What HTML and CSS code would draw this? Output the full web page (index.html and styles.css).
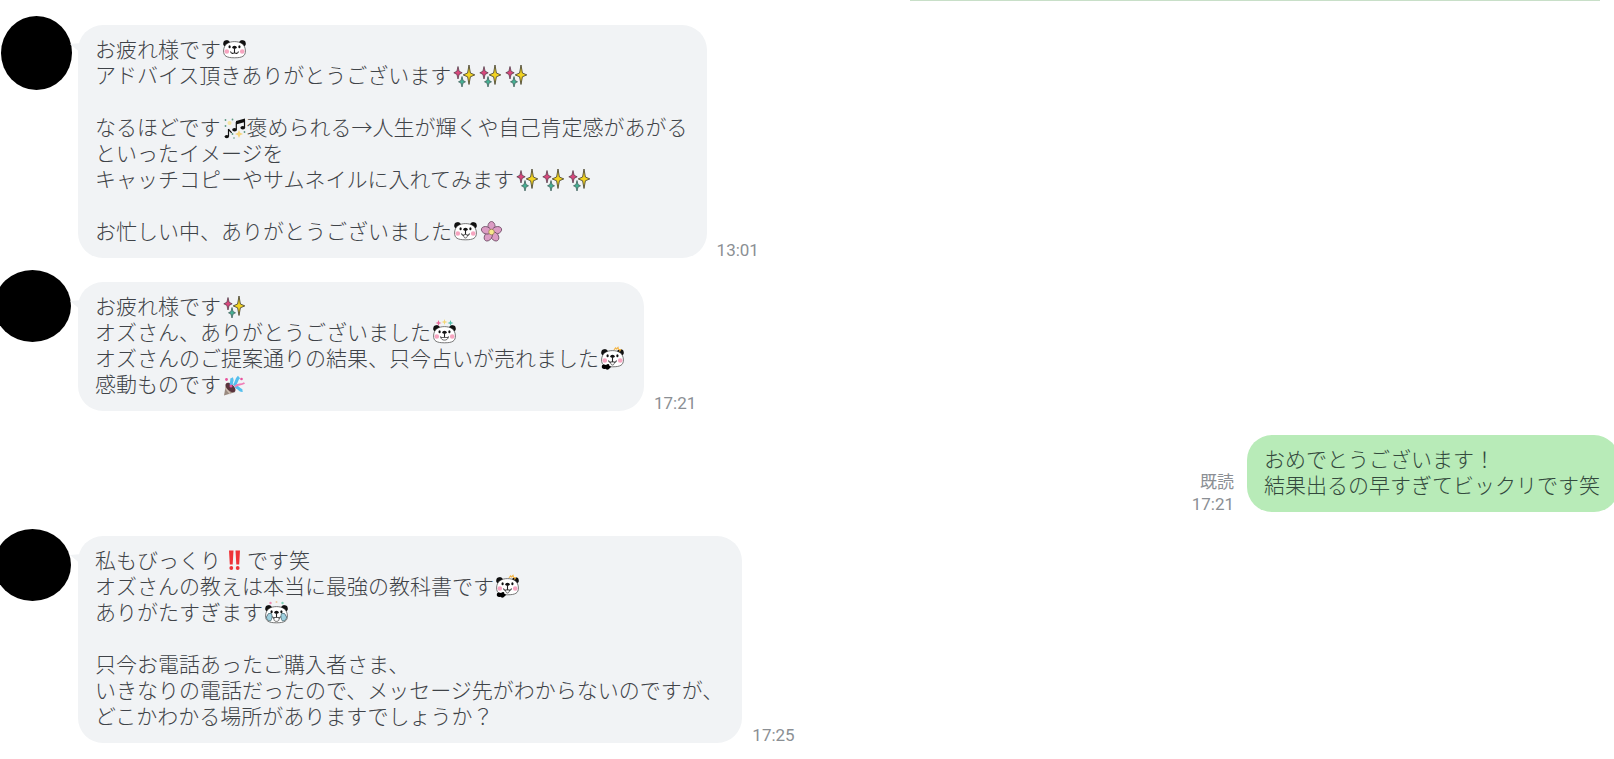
FILE: index.html
```
<!DOCTYPE html>
<html lang="ja">
<head>
  <meta charset="UTF-8">
  <title>トーク</title>
  <link rel="stylesheet" href="styles.css">
</head>
<body>
  <!-- emoji -->
  <svg class="sprites" aria-hidden="true">
    <symbol id="panda-base" viewBox="0 0 25 25">
      <circle cx="4.5" cy="7.5" r="3.2" fill="#111"/>
      <circle cx="20.5" cy="7.5" r="3.2" fill="#111"/>
      <path d="M12.5 5.6C18.5 5.6 23.4 8.5 23.4 15C23.4 20 20.5 21.8 12.5 21.8C4.5 21.8 1.6 20 1.6 15C1.6 8.5 6.5 5.6 12.5 5.6Z" fill="#fff" stroke="#555" stroke-width="0.8"/>
      <path d="M1.6 9C1.5 6 3 4.5 5 4.5C6.5 4.5 7.5 5.2 7.6 6.2C5 7 3 8.5 1.6 9ZM23.4 9C23.5 6 22 4.5 20 4.5C18.5 4.5 17.5 5.2 17.4 6.2C20 7 22 8.5 23.4 9Z" fill="#111"/>
      <circle cx="4.8" cy="15.5" r="2.3" fill="#f6a5c0"/>
      <circle cx="20.2" cy="15.5" r="2.3" fill="#f6a5c0"/>
      <ellipse cx="7.6" cy="10.8" rx="1.1" ry="1.5" fill="#111"/>
      <ellipse cx="17.4" cy="10.8" rx="1.1" ry="1.5" fill="#111"/>
      <ellipse cx="12.5" cy="11.2" rx="2.2" ry="1.5" fill="#111"/>
      <path d="M12.5 12V16.5M8.5 15.5C9 17.8 11.5 17.8 12.5 16.5C13.5 17.8 16 17.8 16.5 15.5" fill="none" stroke="#222" stroke-width="1.1"/>
    </symbol>
    <symbol id="panda" viewBox="0 0 25 25">
      <use href="#panda-base"/>
    </symbol>
    <symbol id="panda-smile" viewBox="0 0 25 25">
      <use href="#panda-base"/>
      <path d="M10.5 17C10.5 21 14.5 21 14.5 17L12.5 16.5Z" fill="#fff" stroke="#444" stroke-width="0.8"/>
    </symbol>
    <symbol id="panda-stars" viewBox="0 0 25 25">
      <use href="#panda-base" y="2"/>
      <path d="M6.5 1L7.3 3.2L9.5 4L7.3 4.8L6.5 7L5.7 4.8L3.5 4L5.7 3.2Z" fill="#e8699a"/>
      <path d="M12.5 0L13.2 2.3L15.5 3L13.2 3.7L12.5 6L11.8 3.7L9.5 3L11.8 2.3Z" fill="#f4d774"/>
      <path d="M18.5 1L19.3 3.2L21.5 4L19.3 4.8L18.5 7L17.7 4.8L15.5 4L17.7 3.2Z" fill="#55bfae"/>
      <path d="M9 18.5H16C16 22 9 22 9 18.5Z" fill="#fff" stroke="#444" stroke-width="0.8"/>
    </symbol>
    <symbol id="panda-hand" viewBox="0 0 25 25">
      <use href="#panda-base"/>
      <path d="M14 5L15.5 3L16.5 4L18 2.5L18.5 4.5L20.5 4.5L19.5 6.5" fill="none" stroke="#f3b64a" stroke-width="1.2"/>
      <path d="M10.5 17C10.5 21 14.5 21 14.5 17Z" fill="#fff" stroke="#444" stroke-width="0.8"/>
      <path d="M2 20.5C3 19 5 19.5 6 20C8 18 10 19 9 20.5C11.5 21 11 23 9.5 23.2C9 25 6 25 5.5 23.8C3 24.5 1 23 2 20.5Z" fill="#000"/>
    </symbol>
    <symbol id="panda-cry" viewBox="0 0 25 25">
      <use href="#panda-base" y="2"/>
      <path d="M4.5 14.5H7.5C8.5 17 8 20.5 6.5 22C4 22 2.5 20 2.4 18ZM20.5 14.5H17.5C16.5 17 17 20.5 18.5 22C21 22 22.5 20 22.6 18Z" fill="#9fd0df" stroke="#4a6a72" stroke-width="0.8"/>
      <path d="M10 18.5H15V20.5C15 23 10 23 10 20.5Z" fill="#fff" stroke="#444" stroke-width="0.8"/>
      <circle cx="6.5" cy="4" r="1.2" fill="#ef8cb3"/>
      <circle cx="12.5" cy="3" r="1" fill="#f0c9a0"/>
      <circle cx="18.5" cy="4" r="1.2" fill="#7ed0b5"/>
    </symbol>
    <symbol id="sparkles" viewBox="0 0 25 25">
      <path d="M6 4.5L7.1 9.2L10.2 10.8L7.1 12.4L6 17L4.9 12.4L1.8 10.8L4.9 9.2Z" fill="#d9487d" stroke="#4a3440" stroke-width="0.7"/>
      <path d="M17 3L18.4 11L22.8 12.9L18.4 14.8L17 22.5L15.6 14.8L11.2 12.9L15.6 11Z" fill="#f2d321" stroke="#3c3828" stroke-width="0.8"/>
      <path d="M10 14.5L11 18.5L13.5 19.8L11 21.1L10 25L9 21.1L6.5 19.8L9 18.5Z" fill="#45b093" stroke="#375650" stroke-width="0.7"/>
    </symbol>
    <symbol id="music" viewBox="0 0 25 25">
      <path d="M14 7L23 4.5V8L14 10.5Z" fill="#111"/>
      <path d="M14.3 8V15.5M22.5 6V13.5M6.5 15V22.5M6.5 15C7 17 9 17 9.5 19" fill="none" stroke="#111" stroke-width="1.2"/>
      <ellipse cx="12.6" cy="15.8" rx="2.4" ry="1.8" fill="#111"/>
      <ellipse cx="20.8" cy="13.8" rx="2.4" ry="1.8" fill="#111"/>
      <ellipse cx="4.8" cy="22.6" rx="2.2" ry="1.7" fill="#111"/>
      <path d="M17 16L18.2 18.8L21 20L18.2 21.2L17 24L15.8 21.2L13 20L15.8 18.8Z" fill="#f7d77c"/>
      <circle cx="7.5" cy="9" r="2" fill="#f5e6a4"/>
      <g fill="#5f9b83">
        <circle cx="3.5" cy="6" r="0.9"/>
        <circle cx="10.5" cy="5.5" r="0.9"/>
        <circle cx="3.5" cy="12" r="0.9"/>
        <circle cx="10.5" cy="20" r="0.9"/>
        <circle cx="22.5" cy="18" r="0.9"/>
        <circle cx="12" cy="24" r="0.8"/>
      </g>
    </symbol>
    <symbol id="flower" viewBox="0 0 25 25">
      <g fill="#dc9cc4" stroke="#6b4a62" stroke-width="0.8">
        <ellipse cx="12.5" cy="8.5" rx="3.6" ry="5"/>
        <ellipse cx="12.5" cy="8.5" rx="3.6" ry="5" transform="rotate(72 12.5 14)"/>
        <ellipse cx="12.5" cy="8.5" rx="3.6" ry="5" transform="rotate(144 12.5 14)"/>
        <ellipse cx="12.5" cy="8.5" rx="3.6" ry="5" transform="rotate(216 12.5 14)"/>
        <ellipse cx="12.5" cy="8.5" rx="3.6" ry="5" transform="rotate(288 12.5 14)"/>
      </g>
      <circle cx="12.5" cy="14" r="2.8" fill="#f8e98c" stroke="#8d7a4c" stroke-width="0.7"/>
    </symbol>
    <symbol id="party" viewBox="0 0 25 25">
      <path d="M4 13L13.5 21L2 24.5Z" fill="#9a8a80"/>
      <path d="M3.5 17L8.5 23" stroke="#cdbdb0" stroke-width="1.5"/>
      <ellipse cx="8.5" cy="16.5" rx="6" ry="3.4" transform="rotate(42 8.5 16.5)" fill="#5a333c"/>
      <path d="M9.5 14C8.5 11 11 10 9.5 7M12 14.500C15 12 13.5 9 17 6" fill="none" stroke="#55bfee" stroke-width="3.2"/>
      <path d="M13.5 17C16 14.5 17 20 20.5 19.500" fill="none" stroke="#55bfee" stroke-width="3"/>
      <path d="M13 15.500C16 12.500 18 14.5 22.5 12" fill="none" stroke="#f07fb8" stroke-width="2"/>
      <g fill="#e9539d">
        <circle cx="4.5" cy="8.5" r="1.4"/>
        <circle cx="19.5" cy="8" r="1.3"/>
        <circle cx="9" cy="15" r="1.5"/>
      </g>
    </symbol>
    <symbol id="bangbang" viewBox="0 0 25 25">
      <path d="M7 3.5H11.5L10.7 17.5H7.8ZM13.5 3.5H18L17.2 17.5H14.3Z" fill="#ee3338"/>
      <circle cx="9.3" cy="21" r="1.9" fill="#ee3338"/>
      <circle cx="15.7" cy="21" r="1.9" fill="#ee3338"/>
    </symbol>
  </svg>

  <main class="chat">
    <div class="previous"></div>

    <div class="message received">
      <div class="avatar"></div>
      <p class="bubble">お疲れ様です<svg class="emoji"><use href="#panda"/></svg><br>
        アドバイス頂きありがとうございます<svg class="emoji"><use href="#sparkles"/></svg><svg class="emoji"><use href="#sparkles"/></svg><svg class="emoji"><use href="#sparkles"/></svg><br>
        <br>
        なるほどです<svg class="emoji"><use href="#music"/></svg>褒められる→人生が輝くや自己肯定感があがる<br>
        といったイメージを<br>
        キャッチコピーやサムネイルに入れてみます<svg class="emoji"><use href="#sparkles"/></svg><svg class="emoji"><use href="#sparkles"/></svg><svg class="emoji"><use href="#sparkles"/></svg><br>
        <br>
        お忙しい中、ありがとうございました<svg class="emoji"><use href="#panda-smile"/></svg><svg class="emoji"><use href="#flower"/></svg></p>
      <div class="meta"><time>13:01</time></div>
    </div>

    <div class="message received">
      <div class="avatar wide high"></div>
      <p class="bubble">お疲れ様です<svg class="emoji"><use href="#sparkles"/></svg><br>
        オズさん、ありがとうございました<svg class="emoji"><use href="#panda-stars"/></svg><br>
        オズさんのご提案通りの結果、只今占いが売れました<svg class="emoji"><use href="#panda-hand"/></svg><br>
        感動ものです<svg class="emoji"><use href="#party"/></svg></p>
      <div class="meta"><time>17:21</time></div>
    </div>

    <div class="message sent">
      <div class="meta"><span>既読</span><time>17:21</time></div>
      <p class="bubble">おめでとうございます！<br>
        結果出るの早すぎてビックリです笑</p>
    </div>

    <div class="message received">
      <div class="avatar wide"></div>
      <p class="bubble">私もびっくり<svg class="emoji"><use href="#bangbang"/></svg>です笑<br>
        オズさんの教えは本当に最強の教科書です<svg class="emoji"><use href="#panda-hand"/></svg><br>
        ありがたすぎます<svg class="emoji"><use href="#panda-cry"/></svg><br>
        <br>
        只今お電話あったご購入者さま、<br>
        いきなりの電話だったので、メッセージ先がわからないのですが、<br>
        どこかわかる場所がありますでしょうか？</p>
      <div class="meta"><time>17:25</time></div>
    </div>
  </main>
</body>
</html>
```
FILE: styles.css
```
body {
  margin: 0;
  background: #fff;
  font-family: "Noto Sans CJK JP", sans-serif;
  overflow: hidden;
}
.sprites {
  position: absolute;
  width: 0;
  height: 0;
}
.chat {
  display: flex;
  flex-direction: column;
  gap: 24px;
}
/* bottom edge of the message scrolled out above */
.previous {
  width: 690px;
  height: 1px;
  margin-right: 14px;
  align-self: flex-end;
  background: #c8dfc8;
}
.message {
  display: flex;
  align-items: flex-end;
}
.bubble {
  position: relative;
  margin: 0;
  padding: 10px 19px 15px 17px;
  border-radius: 25px;
  background: #f1f3f5;
  color: #3f4348;
  font-size: 21px;
  font-weight: 300;
  line-height: 26px;
  white-space: nowrap;
}
.received .bubble::before {
  content: "";
  position: absolute;
  top: 18px;
  left: -8px;
  border-top: 1px solid transparent;
  border-right: 12px solid #f1f3f5;
  border-bottom: 10px solid transparent;
}
.sent {
  justify-content: flex-end;
  margin-right: -5px;
}
.sent .bubble {
  background: #b8ebb8;
  color: #33493d;
}
.avatar {
  flex: none;
  align-self: flex-start;
  width: 71px;
  height: 74px;
  margin: -9px 6px 0 1px;
  border-radius: 50%;
  background: #000;
}
.avatar.wide {
  width: 77px;
  height: 72px;
  margin: -7px 7px 0 -6px;
}
.avatar.high {
  margin-top: -12px;
}
.emoji {
  width: 25px;
  height: 25px;
  margin-left: 1px;
  vertical-align: -4px;
}
.meta {
  display: flex;
  flex-direction: column;
  align-items: flex-end;
  gap: 6px;
  margin: 0 10px;
  color: #8b8f94;
  font-family: Roboto, "Noto Sans CJK JP", sans-serif;
  font-size: 17px;
  line-height: 16px;
}
.sent .meta {
  margin-right: 13px;
}
```
